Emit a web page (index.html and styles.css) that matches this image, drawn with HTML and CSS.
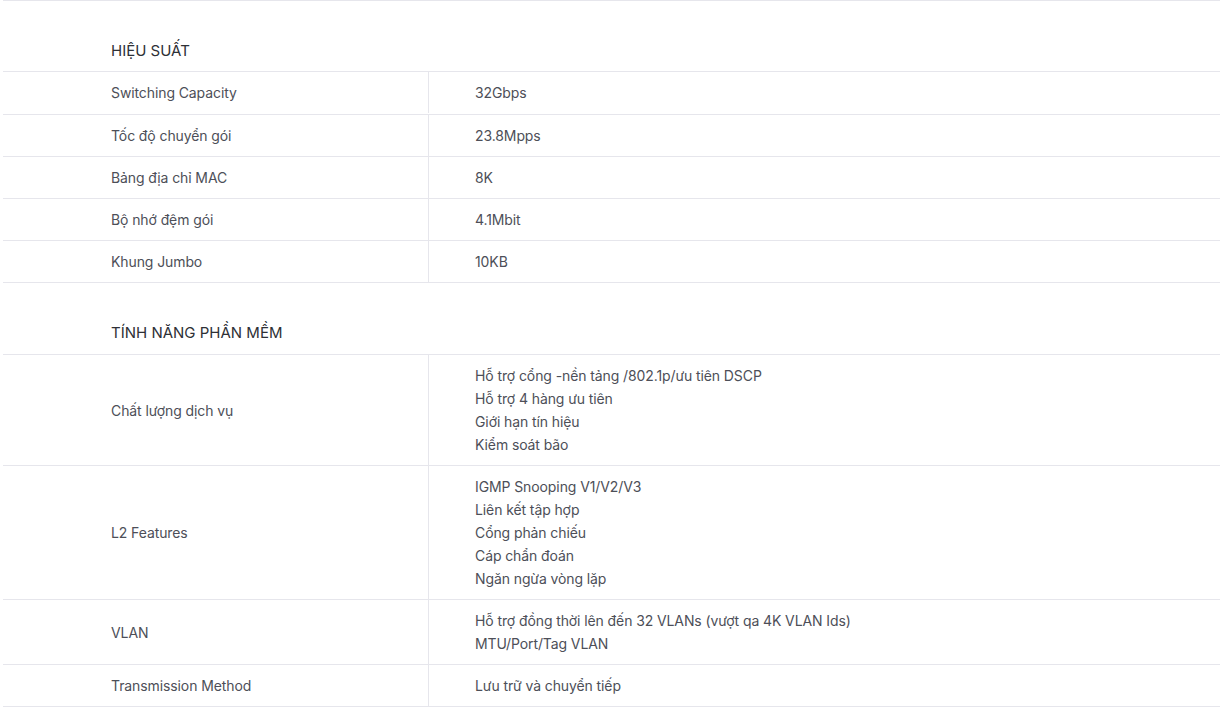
FILE: index.html
```html
<!DOCTYPE html>
<html lang="vi">
<head>
<meta charset="utf-8">
<link rel="stylesheet" href="styles.css">
</head>
<body>
<div class="specs">
  <section class="group first">
    <h3 class="group-title">HIỆU SUẤT</h3>
    <div class="row"><div class="label">Switching Capacity</div><div class="value">32Gbps</div></div>
    <div class="row"><div class="label">Tốc độ chuyển gói</div><div class="value">23.8Mpps</div></div>
    <div class="row"><div class="label">Bảng địa chỉ MAC</div><div class="value">8K</div></div>
    <div class="row"><div class="label">Bộ nhớ đệm gói</div><div class="value">4.1Mbit</div></div>
    <div class="row"><div class="label">Khung Jumbo</div><div class="value">10KB</div></div>
  </section>
  <section class="group">
    <h3 class="group-title">TÍNH NĂNG PHẦN MỀM</h3>
    <div class="row"><div class="label">Chất lượng dịch vụ</div><div class="value">Hỗ trợ cổng -nền tảng /802.1p/ưu tiên DSCP<br>Hỗ trợ 4 hàng ưu tiên<br>Giới hạn tín hiệu<br>Kiểm soát bão</div></div>
    <div class="row"><div class="label">L2 Features</div><div class="value">IGMP Snooping V1/V2/V3<br>Liên kết tập hợp<br>Cổng phản chiếu<br>Cáp chẩn đoán<br>Ngăn ngừa vòng lặp</div></div>
    <div class="row"><div class="label">VLAN</div><div class="value">Hỗ trợ đồng thời lên đến 32 VLANs (vượt qa 4K VLAN Ids)<br>MTU/Port/Tag VLAN</div></div>
    <div class="row"><div class="label">Transmission Method</div><div class="value">Lưu trữ và chuyển tiếp</div></div>
  </section>
</div>
</body>
</html>
```
FILE: styles.css
```css
html, body {
  margin: 0;
  padding: 0;
  background: #fff;
}
body {
  font-family: Inter, "Noto Sans", sans-serif;
  color: #4d4f58;
  font-size: 14px;
  letter-spacing: -0.1px;
}
.specs {
  margin: 0 2px 0 3px;
  border-top: 1px solid #e6e6ec;
}
.group-title {
  margin: 0;
  padding: 38px 0 8px 108px;
  font-size: 15px;
  font-weight: 400;
  line-height: 24px;
  letter-spacing: 0;
  color: #2e3036;
  border-bottom: 1px solid #e6e6ec;
}
.group + .group .group-title {
  padding-bottom: 9px;
}
.row {
  display: grid;
  grid-template-columns: 426px 1fr;
  border-bottom: 1px solid #e6e6ec;
}
.first .group-title + .row {
  padding-bottom: 1px;
}
.label {
  display: flex;
  align-items: center;
  padding: 9px 0 9px 108px;
  line-height: 23px;
  border-right: 1px solid #e6e6ec;
}
.value {
  padding: 9px 0 9px 46px;
  line-height: 23px;
}
```
